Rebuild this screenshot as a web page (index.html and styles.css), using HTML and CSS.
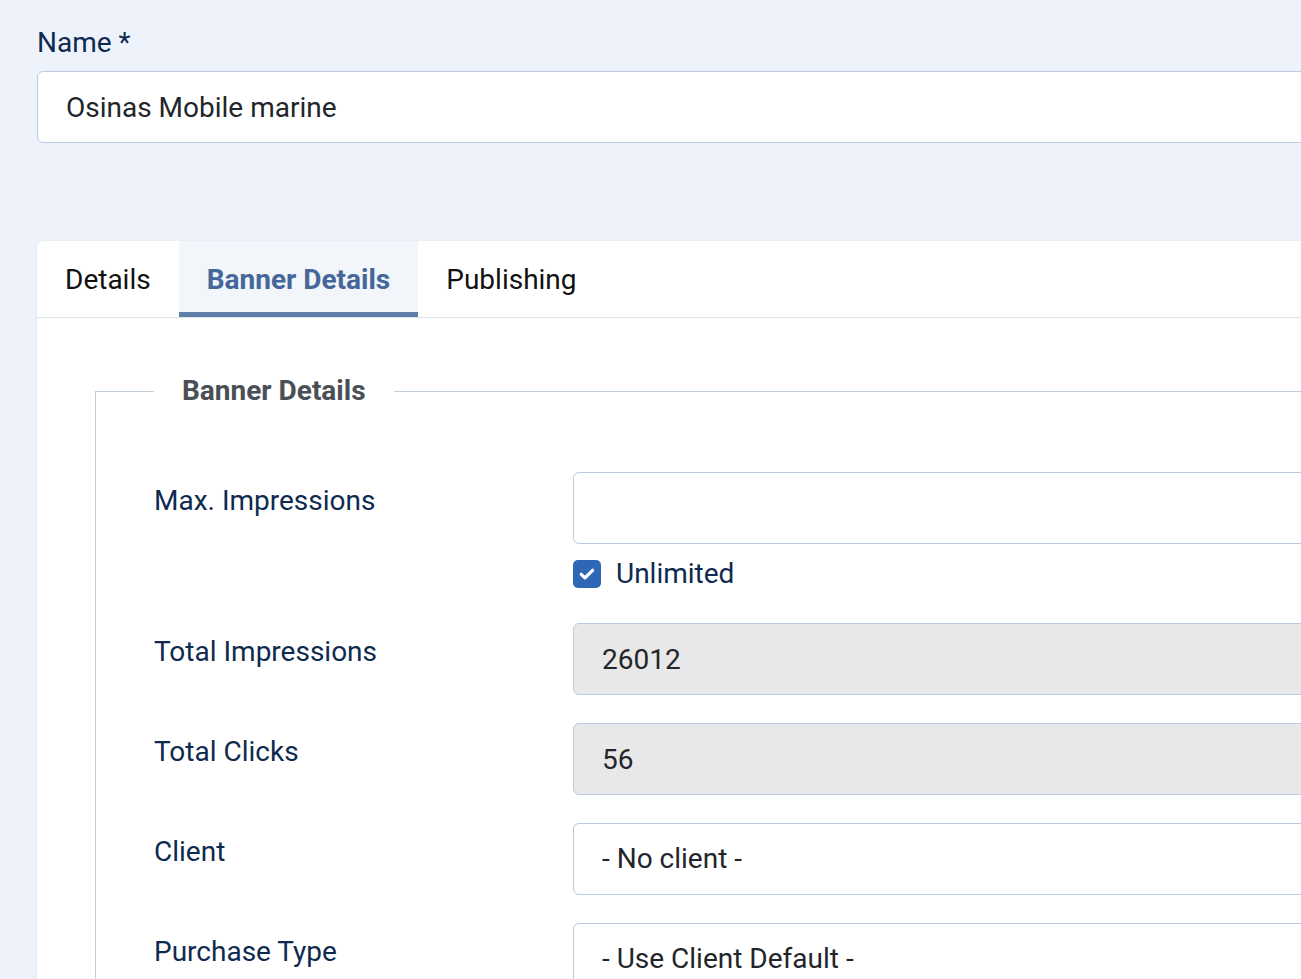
FILE: index.html
```html
<!DOCTYPE html>
<html lang="en">
<head>
    <meta charset="UTF-8">
    <title>Edit Banner</title>
    <link rel="stylesheet" href="styles.css">
</head>
<body>
    <div class="page">
        <!-- Title field -->
        <div class="name-group">
            <label class="top-label" for="jform_name">Name *</label>
            <input class="form-control" type="text" id="jform_name" value="Osinas Mobile marine">
        </div>

        <div class="card">
            <div class="tabs">
                <button class="tab">Details</button>
                <button class="tab active">Banner Details</button>
                <button class="tab">Publishing</button>
            </div>

            <div class="tab-body">
                <fieldset class="options">
                    <legend>Banner Details</legend>

                    <div class="row">
                        <label class="control-label">Max. Impressions</label>
                        <div class="controls">
                            <input class="form-control" type="text" value="">
                            <div class="check">
                                <span class="checkbox">
                                    <svg viewBox="0 0 20 20" width="20" height="20"><path d="M4.2 10.3l3.8 3.6 7.6-7.6" fill="none" stroke="#fff" stroke-width="3.2" stroke-linecap="round" stroke-linejoin="round"/></svg>
                                </span>
                                <span>Unlimited</span>
                            </div>
                        </div>
                    </div>

                    <div class="row">
                        <label class="control-label">Total Impressions</label>
                        <div class="controls">
                            <input class="form-control readonly" type="text" value="26012" readonly>
                        </div>
                    </div>

                    <div class="row">
                        <label class="control-label">Total Clicks</label>
                        <div class="controls">
                            <input class="form-control readonly" type="text" value="56" readonly>
                        </div>
                    </div>

                    <div class="row">
                        <label class="control-label">Client</label>
                        <div class="controls">
                            <div class="form-control select">- No client -</div>
                        </div>
                    </div>

                    <div class="row">
                        <label class="control-label">Purchase Type</label>
                        <div class="controls">
                            <div class="form-control select">- Use Client Default -</div>
                        </div>
                    </div>
                </fieldset>
            </div>
        </div>
    </div>
</body>
</html>
```

FILE: styles.css
```css
html, body { margin: 0; padding: 0; overflow: hidden; }
body { background-color: #eef3fb; font-family: 'Roboto', 'Liberation Sans', sans-serif; font-size: 28px; line-height: 42px; color: #22262a; }
.page { width: 1500px; padding: 22px 0 0 37px; }

.top-label { display: block; color: #0e2a4f; margin-bottom: 7px; }
.form-control { display: block; box-sizing: border-box; width: 100%; height: 72px; padding: 14px 28px; font-family: inherit; font-size: 28px; line-height: 42px; color: #22262a; background-color: #fff; border: 1px solid #bccbe0; border-radius: 6px; outline: none; }
.readonly { background-color: #e8e8e8; }

.name-group { margin-bottom: 98px; }

.card { background-color: #fff; border-radius: 6px 0 0 0; box-shadow: -1px 0 3px rgba(30, 50, 90, 0.06); }
.tabs { display: flex; border-bottom: 1px solid #dee3ea; }
.tab { font-family: inherit; font-size: 28px; line-height: 42px; padding: 18px 28px 16px; border: none; background: none; color: #111; cursor: pointer; }
.tab.active { background-color: #f2f5f9; color: #45679a; font-weight: bold; box-shadow: inset 0 -5px 0 #5e7ea8; }

.tab-body { padding: 52px 0 200px 58px; }
.options { margin: 0; padding: 0 0 0 58px; border: none; border-top: 1px solid #c4cfdd; border-left: 1px solid #c4cfdd; }
.options legend { padding: 0 28px; font-size: 28px; font-weight: bold; color: #4a4f56; }

.row { display: flex; margin-bottom: 28px; }
.row:first-of-type { margin-top: 60px; }
.control-label { width: 419px; flex-shrink: 0; padding-top: 8px; color: #0e2a4f; }
.controls { flex: 1; }

.check { display: flex; align-items: center; margin-top: 9px; color: #0e2a4f; }
.checkbox { display: flex; align-items: center; justify-content: center; width: 28px; height: 28px; margin-right: 15px; background-color: #2d67b5; border-radius: 5px; }
```
